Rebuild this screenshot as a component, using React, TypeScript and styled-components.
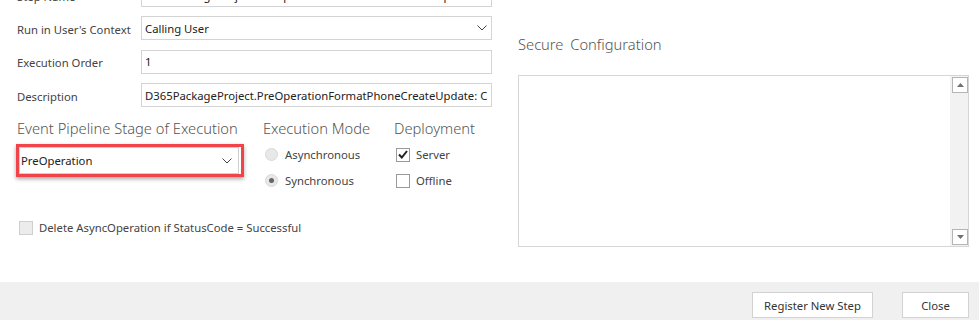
import React from "react";
import styled, { createGlobalStyle } from "styled-components";

const Global = createGlobalStyle`
  html, body { margin: 0; padding: 0; background: #fff; }
  body { font-family: "Noto Sans", "Open Sans", sans-serif; font-size: 11.3px; color: #333; }
  * { box-sizing: border-box; }
`;

const Page = styled.div`
  width: 979px;
  height: 320px;
  overflow: hidden;
  display: flex;
  flex-direction: column;
`;

const Main = styled.div`
  height: 282px;
  display: flex;
`;

const LeftCol = styled.div`
  width: 518px;
  padding-left: 17px;
  display: flex;
  flex-direction: column;
`;

const FormGrid = styled.div`
  margin-top: -17px;
  display: grid;
  grid-template-columns: 124px 351px;
  grid-auto-rows: 24px;
  row-gap: 9.4px;
  align-items: center;
`;

const Label = styled.div`
  color: #444;
  font-size: 11.3px;
  white-space: nowrap;
  padding-top: 2px;
`;

const Field = styled.div`
  height: 24px;
  border: 1px solid #d4d4d4;
  background: #fff;
  display: flex;
  align-items: center;
  padding: 0 4px 0 3px;
  color: #222;
  font-size: 11.3px;
  white-space: nowrap;
  overflow: hidden;
`;

const FieldText = styled.span`
  flex: 1;
  overflow: hidden;
`;

const Chevron = () => (
  <svg width="10" height="6" viewBox="0 0 10 6">
    <polyline points="0.5,0.5 5,5 9.5,0.5" fill="none" stroke="#444" strokeWidth="1" />
  </svg>
);

const Sections = styled.div`
  margin-top: 10px;
  display: flex;
`;

const Section = styled.div<{ $w: number }>`
  width: ${(p) => p.$w}px;
  display: flex;
  flex-direction: column;
`;

const SectionTitle = styled.div`
  font-size: 14.7px;
  font-weight: 300;
  color: #555;
  height: 22px;
  line-height: 22px;
  white-space: nowrap;
`;

const Highlight = styled.div`
  margin-top: 5px;
  margin-left: -1px;
  width: 228px;
  height: 33px;
  border: 3px solid #f0434a;
  box-shadow: 0 2px 4px rgba(0, 0, 0, 0.35);
  padding-right: 2px;
  display: flex;
`;

const StageSelect = styled.div`
  flex: 1;
  height: 27px;
  border: 1px solid #cfcfcf;
  background: #fff;
  display: flex;
  align-items: center;
  padding: 0 6px 0 1px;
  font-size: 11.3px;
  color: #222;
`;

const OptionList = styled.div`
  margin-top: 7px;
  display: flex;
  flex-direction: column;
  gap: 9px;
`;

const Option = styled.div`
  display: flex;
  align-items: center;
  height: 17px;
  gap: 6px;
  font-size: 11.3px;
  color: #444;
  white-space: nowrap;
`;

const Radio = styled.span<{ $on?: boolean }>`
  width: 13px;
  height: 13px;
  border-radius: 50%;
  border: 1px solid #d8d8d8;
  background: #e8e8e8;
  display: flex;
  align-items: center;
  justify-content: center;
  margin-left: 2px;
  margin-right: 1px;
  &::after {
    content: "";
    display: ${(p) => (p.$on ? "block" : "none")};
    width: 5px;
    height: 5px;
    border-radius: 50%;
    background: #666;
  }
`;

const Box = styled.span<{ $grey?: boolean }>`
  width: 14px;
  height: 14px;
  border: 1px solid #9a9a9a;
  background: ${(p) => (p.$grey ? "#ececec" : "#fff")};
  border-color: ${(p) => (p.$grey ? "#cfcfcf" : "#9a9a9a")};
  display: flex;
  align-items: center;
  justify-content: center;
  margin-left: 2px;
`;

const Check = () => (
  <svg width="10" height="9" viewBox="0 0 10 9">
    <polyline points="1,4.5 3.8,7.5 9,1" fill="none" stroke="#222" strokeWidth="2" />
  </svg>
);

const DeleteRow = styled.div`
  margin-top: 31px;
  display: flex;
  align-items: center;
  gap: 6px;
  font-size: 11.3px;
  color: #444;
  height: 15px;
`;

const RightCol = styled.div`
  flex: 1;
  display: flex;
  flex-direction: column;
  padding-right: 10px;
`;

const RightTitle = styled.div`
  margin-top: 33px;
  font-size: 14.7px;
  font-weight: 300;
  color: #555;
  height: 22px;
  line-height: 22px;
  word-spacing: 3px;
`;

const TextArea = styled.div`
  margin-top: 20px;
  height: 172px;
  border: 1px solid #d6d6d6;
  background: #fff;
  display: flex;
  justify-content: flex-end;
`;

const ScrollBar = styled.div`
  width: 18px;
  background: #f2f2f2;
  display: flex;
  flex-direction: column;
  justify-content: space-between;
  padding: 1px 1px 1px 2px;
`;

const ScrollBtn = styled.div`
  width: 16px;
  height: 16px;
  border: 1px solid #b5b5b5;
  background: #fff;
  display: flex;
  align-items: center;
  justify-content: center;
`;

const Arrow = ({ up }: { up?: boolean }) => (
  <svg width="7" height="4" viewBox="0 0 7 4">
    <polygon points={up ? "0,4 3.5,0 7,4" : "0,0 3.5,4 7,0"} fill="#707070" />
  </svg>
);

const Footer = styled.div`
  height: 38px;
  background: #f0f0f0;
  display: flex;
  justify-content: flex-end;
  align-items: flex-start;
  padding: 10px 10px 0 0;
  gap: 29px;
`;

const Button = styled.button<{ $w: number }>`
  width: ${(p) => p.$w}px;
  height: 26px;
  border: 1px solid #d2d2d2;
  background: #fff;
  font-family: inherit;
  font-size: 11.3px;
  color: #333;
  padding: 0;
`;

export default function App() {
  return (
    <>
      <Global />
      <Page>
        <Main>
          <LeftCol>
            <FormGrid>
              <Label>Step Name</Label>
              <Field>
                <FieldText>D365PackageProject.PreOperationFormatPhoneCreateUpdate</FieldText>
              </Field>
              <Label>Run in User's Context</Label>
              <Field>
                <FieldText>Calling User</FieldText>
                <Chevron />
              </Field>
              <Label>Execution Order</Label>
              <Field>
                <FieldText>1</FieldText>
              </Field>
              <Label>Description</Label>
              <Field>
                <FieldText>D365PackageProject.PreOperationFormatPhoneCreateUpdate: Create of phonecall</FieldText>
              </Field>
            </FormGrid>
            <Sections>
              <Section $w={246}>
                <SectionTitle>Event Pipeline Stage of Execution</SectionTitle>
                <Highlight>
                  <StageSelect>
                    <FieldText>PreOperation</FieldText>
                    <Chevron />
                  </StageSelect>
                </Highlight>
              </Section>
              <Section $w={131}>
                <SectionTitle>Execution Mode</SectionTitle>
                <OptionList>
                  <Option>
                    <Radio />
                    Asynchronous
                  </Option>
                  <Option>
                    <Radio $on />
                    Synchronous
                  </Option>
                </OptionList>
              </Section>
              <Section $w={100}>
                <SectionTitle>Deployment</SectionTitle>
                <OptionList>
                  <Option>
                    <Box>
                      <Check />
                    </Box>
                    Server
                  </Option>
                  <Option>
                    <Box />
                    Offline
                  </Option>
                </OptionList>
              </Section>
            </Sections>
            <DeleteRow>
              <Box $grey />
              Delete AsyncOperation if StatusCode = Successful
            </DeleteRow>
          </LeftCol>
          <RightCol>
            <RightTitle>Secure Configuration</RightTitle>
            <TextArea>
              <ScrollBar>
                <ScrollBtn>
                  <Arrow up />
                </ScrollBtn>
                <ScrollBtn>
                  <Arrow />
                </ScrollBtn>
              </ScrollBar>
            </TextArea>
          </RightCol>
        </Main>
        <Footer>
          <Button $w={121}>Register New Step</Button>
          <Button $w={67}>Close</Button>
        </Footer>
      </Page>
    </>
  );
}
